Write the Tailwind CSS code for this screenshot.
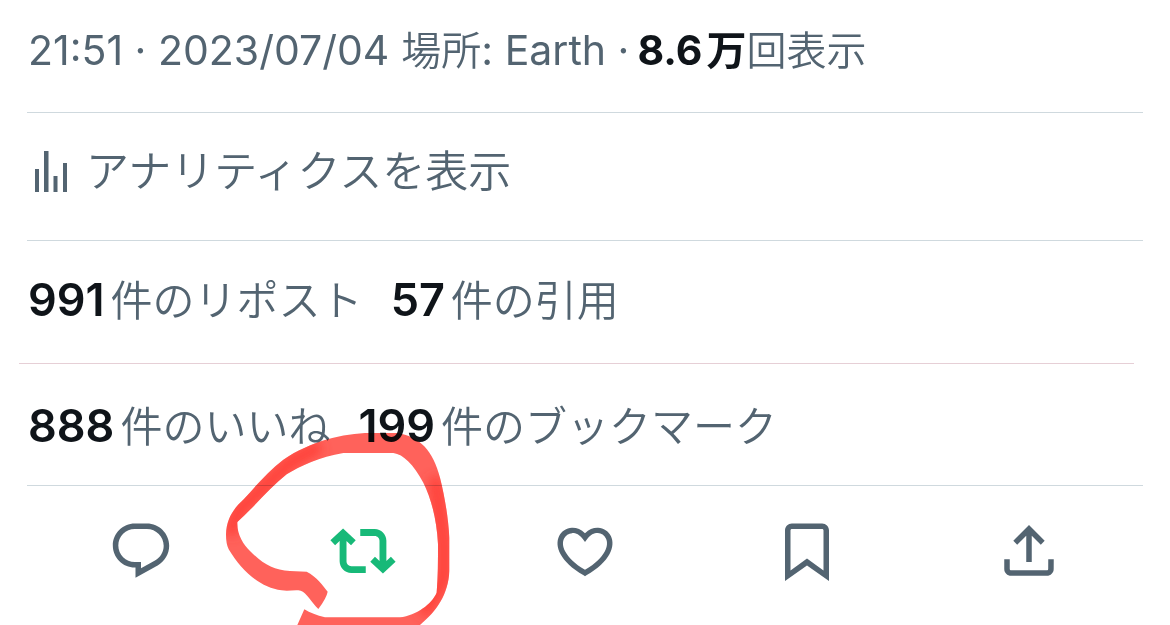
<!DOCTYPE html>
<html lang="ja">
<head>
<meta charset="utf-8">
<meta name="viewport" content="width=device-width, initial-scale=1">
<title>ポスト</title>
<script src="https://cdn.jsdelivr.net/npm/@tailwindcss/browser@4"></script>
</head>
<body class="bg-white">
<main class="relative overflow-hidden font-['Inter','Noto_Sans_CJK_JP',sans-serif] text-[42px] leading-[60px] font-normal text-[#536471] whitespace-nowrap">
  <p class="flex px-7 pt-5 pb-8 text-[41px]">
    <time datetime="2023-07-04T21:51" class="h-[60px]">21:51 · 2023/07/04</time>
    <span class="ml-3 h-[60px]"><span class="text-[40px] font-[350]">場所</span>: Earth ·</span>
    <a href="#views" class="ml-2 h-[60px]"><strong class="font-bold text-[#0f1419]">8.6<span class="ml-1 text-[40px] font-bold">万</span></strong><span class="text-[40px] font-[350]">回表示</span></a>
  </p>
  <hr class="mx-[27px] border-[#cfd9de]">

  <a href="#analytics" class="flex items-center gap-5 px-[34px] pt-7 pb-[39px]">
    <svg class="h-[42px] w-[34px]" viewBox="0 0 34 42" fill="currentColor" aria-hidden="true">
      <path d="M1 19h4v23H1zM10 1h4.500v41H10zM19.500 26h4v16h-4zM29 13h4v29h-4z"/>
    </svg>
    <span class="-ml-0.5 h-[60px] text-[43px] font-[350]">アナリティクスを表示</span>
  </a>
  <hr class="mx-[27px] border-[#cfd9de]">

  <div class="flex gap-7 px-7 pt-[29px] pb-[33px]">
    <a href="#reposts" class="h-[60px]"><strong class="mr-1.5 text-[45px] font-semibold text-[#0f1419]">991</strong><span class="font-[350]">件のリポスト</span></a>
    <a href="#quotes" class="h-[60px]"><strong class="mr-1.5 text-[45px] font-semibold text-[#0f1419]">57</strong><span class="font-[350]">件の引用</span></a>
  </div>
  <hr class="mr-9 ml-[19px] border-[#e6cfd6]">

  <div class="flex gap-7 px-7 pt-8 pb-[29px]">
    <a href="#likes" class="h-[60px]"><strong class="mr-1.5 text-[45px] font-semibold text-[#0f1419]">888</strong><span class="font-[350]">件のいいね</span></a>
    <a href="#bookmarks" class="h-[60px]"><strong class="mr-1.5 text-[45px] font-semibold text-[#0f1419]">199</strong><span class="font-[350]">件のブックマーク</span></a>
  </div>
  <hr class="mx-[27px] border-[#cfd9de]">

  <div class="grid grid-cols-5 justify-items-center px-[30px] pt-8 pb-[41px]">
    <button type="button" aria-label="返信">
      <svg class="size-[66px]" viewBox="0 0 24 24" fill="currentColor"><path d="M1.751 10c0-4.42 3.584-8 8.005-8h4.366c4.49 0 8.129 3.64 8.129 8.13 0 2.96-1.607 5.68-4.196 7.11l-8.054 4.46v-3.69h-.067c-4.49.1-8.183-3.51-8.183-8.01zm8.005-6c-3.317 0-6.005 2.69-6.005 6 0 3.37 2.77 6.08 6.138 6.01l.351-.01h1.761v2.3l5.087-2.81c1.951-1.08 3.163-3.13 3.163-5.36 0-3.39-2.744-6.13-6.129-6.13H9.756z"/></svg>
    </button>
    <div class="relative">
      <button type="button" aria-label="リポスト" aria-pressed="true" class="block text-[#17b978]">
        <svg class="size-[66px]" viewBox="0 0 24 24" fill="currentColor"><path d="M4.750 3.790l4.603 4.300-1.706 1.820L6 8.380v7.370c0 .97.784 1.750 1.750 1.750H13V20H7.750c-2.347 0-4.250-1.900-4.250-4.250V8.380L1.853 9.910.147 8.090l4.603-4.300zm11.500 2.710H11V4h5.250c2.347 0 4.250 1.900 4.250 4.250v7.370l1.647-1.530 1.706 1.820-4.603 4.300-4.603-4.300 1.706-1.820L18 15.620V8.250c0-.97-.784-1.750-1.750-1.750z"/></svg>
      </button>
      <!-- hand-drawn marker ring around the repost button -->
      <svg class="pointer-events-none absolute -top-[107px] -left-[120px] h-[215px] w-[260px] max-w-none mix-blend-multiply" viewBox="0 0 780 645" aria-hidden="true">
        <defs>
          <clipPath id="ring"><path id="marker" d="M325 594C305 575 290 545 272 539C250 536 235 542 215 538C150 530 95 480 56 415Q48 400 48 370C50 320 72 292 102 264C140 222 175 180 220 146C300 92 400 66 480 66H560C630 76 670 120 690 200C704 255 715 320 718 380V480C715 550 680 600 630 642H262L283 595C300 605 320 614 345 619H570C620 612 665 580 680 545C684 500 684 450 684 400C680 320 662 260 640 215C610 160 580 130 550 126H400C330 138 270 165 230 190C180 230 130 290 82 333C80 370 100 400 120 420C160 460 190 478 240 480L290 482C320 497 340 525 353 542Q350 560 325 594Z"/></clipPath>
          <filter id="soft" x="-20%" y="-20%" width="140%" height="140%"><feGaussianBlur stdDeviation="16"/></filter>
        </defs>
        <use href="#marker" fill="#ff625b"/>
        <g clip-path="url(#ring)">
          <path d="M60 370L85 300L240 155L330 105M675 200L702 400V500L640 610" fill="none" stroke="#ff4038" stroke-width="38" filter="url(#soft)"/>
        </g>
      </svg>
    </div>
    <button type="button" aria-label="いいね">
      <svg class="size-[66px]" viewBox="0 0 24 24" fill="currentColor"><path d="M16.697 5.500c-1.222-.06-2.679.51-3.890 2.160l-.805 1.090-.806-1.090C9.984 6.010 8.526 5.440 7.304 5.500c-1.243.07-2.349.78-2.910 1.910-.552 1.120-.633 2.780.479 4.820 1.074 1.970 3.257 4.270 7.129 6.610 3.870-2.340 6.052-4.640 7.126-6.610 1.111-2.040 1.030-3.700.477-4.820-.561-1.130-1.666-1.840-2.908-1.910zm4.187 7.690c-1.351 2.480-4.001 5.120-8.379 7.670l-.503.3-.504-.3c-4.379-2.550-7.029-5.190-8.382-7.670-1.360-2.500-1.410-4.860-.514-6.670.887-1.790 2.647-2.910 4.601-3.010 1.651-.09 3.368.56 4.798 2.010 1.429-1.450 3.146-2.100 4.796-2.010 1.954.1 3.714 1.220 4.601 3.010.896 1.810.846 4.170-.514 6.670z"/></svg>
    </button>
    <button type="button" aria-label="ブックマーク">
      <svg class="size-[66px]" viewBox="0 0 24 24" fill="currentColor"><path d="M4 4.500C4 3.120 5.119 2 6.500 2h11C18.881 2 20 3.120 20 4.500v18.440l-8-5.710-8 5.710V4.500zM6.500 4c-.276 0-.5.22-.5.5v14.560l6-4.290 6 4.290V4.500c0-.28-.224-.5-.5-.5h-11z"/></svg>
    </button>
    <button type="button" aria-label="共有">
      <svg class="size-[66px]" viewBox="0 0 24 24" fill="currentColor"><path d="M12 2.590l5.700 5.700-1.410 1.420L13 6.410V16h-2V6.410l-3.300 3.300-1.410-1.420L12 2.590zM21 15l-.02 3.510c0 1.380-1.120 2.490-2.500 2.490H5.500C4.110 21 3 19.880 3 18.500V15h2v3.500c0 .28.22.5.5.5h12.980c.28 0 .5-.22.5-.5L19 15h2z"/></svg>
    </button>
  </div>
</main>
</body>
</html>
